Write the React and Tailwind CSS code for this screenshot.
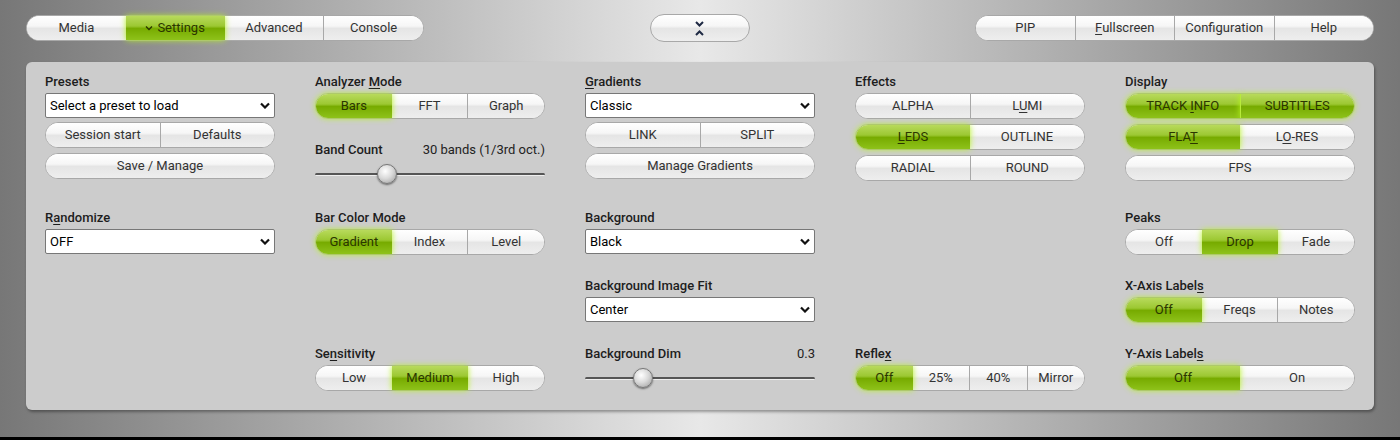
import React from "react";

const white =
  "bg-[linear-gradient(to_bottom,#ffffff_0%,#f6f6f6_42%,#e5e5e5_52%,#eeeeee_100%)] text-[#333]";
const green =
  "bg-[linear-gradient(to_bottom,#b8da5c_0%,#9cc832_42%,#77ab00_52%,#8ec21a_100%)] text-[#2b3600] shadow-[0_0_6px_#b6f41e] z-10";

function Seg({ items, active = [], h = "h-[26px]" }) {
  return (
    <div className={`flex ${h} rounded-full border border-[#a8a8a8] bg-white`}>
      {items.map((it, i) => {
        const on = active.includes(i);
        const prevOn = i > 0 && active.includes(i - 1);
        const first = i === 0;
        const last = i === items.length - 1;
        return (
          <div
            key={i}
            className={`relative flex-1 flex items-center justify-center text-[13px] ${on ? green : white} ${
              first ? "rounded-l-full" : on && prevOn ? "border-l border-[#b7ea3a]" : on || prevOn ? "" : "border-l border-[#a8a8a8]"
            } ${last ? "rounded-r-full" : ""}`}
          >
            {it}
          </div>
        );
      })}
    </div>
  );
}

function Label({ children, right }) {
  return (
    <div className="h-[23px] flex items-center justify-between text-[13px] text-[#1d1d1d] font-medium">
      <span>{children}</span>
      {right && <span className="font-normal text-[#222]">{right}</span>}
    </div>
  );
}

function Select({ value }) {
  return (
    <div className="relative h-[25px] bg-white border border-[#777] rounded-[2px] flex items-center pl-[4px] text-[13px] text-black">
      {value}
      <svg className="absolute right-[4px] top-[8px]" width="10" height="7" viewBox="0 0 10 7">
        <path d="M1 1.5 L5 5.5 L9 1.5" fill="none" stroke="#111" strokeWidth="2.2" />
      </svg>
    </div>
  );
}

function Slider({ pos }) {
  return (
    <div className="relative h-[26px] flex items-center">
      <div className="w-full h-[3px] rounded-full bg-[#555] border-b border-[#eee]" />
      <div
        className="absolute top-[3px] w-[20px] h-[20px] rounded-full border border-[#777] bg-[radial-gradient(circle_at_40%_35%,#ffffff_0%,#dadada_45%,#9a9a9a_100%)] shadow-[0_1px_2px_rgba(0,0,0,0.5)]"
        style={{ left: pos }}
      />
    </div>
  );
}

const u = (s) => <u className="underline-offset-2">{s}</u>;

export default function App() {
  return (
    <div className="w-[1400px] h-[440px] bg-black font-['Roboto',sans-serif]">
      <div className="h-[437px] bg-[linear-gradient(to_right,#777777_0%,#e8e8e8_50%,#777777_100%)] pt-[14px] px-[26px]">
        <div className="flex justify-between items-center">
          <div className="w-[398px]">
            <Seg
              items={[
                "Media",
                <span className="flex items-center gap-[4px]">
                  <svg width="8" height="6" viewBox="0 0 8 6">
                    <path d="M1 1.5 L4 4.5 L7 1.5" fill="none" stroke="#2b3600" strokeWidth="1.4" />
                  </svg>
                  Settings
                </span>,
                "Advanced",
                "Console",
              ]}
              active={[1]}
            />
          </div>
          <div className={`w-[100px] h-[28px] rounded-full border border-[#a8a8a8] flex flex-col items-center justify-center gap-[3px] ${white}`}>
            <svg width="9" height="6" viewBox="0 0 9 6">
              <path d="M1 1 L4.5 4.5 L8 1" fill="none" stroke="#1f2a44" strokeWidth="2" />
            </svg>
            <svg width="9" height="6" viewBox="0 0 9 6">
              <path d="M1 5 L4.5 1.5 L8 5" fill="none" stroke="#1f2a44" strokeWidth="2" />
            </svg>
          </div>
          <div className="w-[399px]">
            <Seg items={["PIP", <span>{u("F")}ullscreen</span>, "Configuration", "Help"]} />
          </div>
        </div>

        <div className="mt-[20px] h-[348px] bg-[#cccccc] rounded-[6px] shadow-[1px_2px_3px_rgba(0,0,0,0.35)] px-[19px] pt-[8px]">
          <div className="grid grid-cols-5 gap-x-[40px] grid-rows-[repeat(5,68px)]">
            {/* column 1 */}
            <div className="col-start-1 row-start-1 row-span-2">
              <Label>Presets</Label>
              <Select value="Select a preset to load" />
              <div className="mt-[4px]">
                <Seg items={["Session start", "Defaults"]} />
              </div>
              <div className="mt-[5px]">
                <Seg items={["Save / Manage"]} />
              </div>
            </div>
            <div className="col-start-1 row-start-3">
              <Label>R{u("a")}ndomize</Label>
              <Select value="OFF" />
            </div>

            {/* column 2 */}
            <div className="col-start-2 row-start-1">
              <Label>Analyzer {u("M")}ode</Label>
              <Seg items={["Bars", "FFT", "Graph"]} active={[0]} />
            </div>
            <div className="col-start-2 row-start-2">
              <Label right="30 bands (1/3rd oct.)">Band Count</Label>
              <Slider pos="62px" />
            </div>
            <div className="col-start-2 row-start-3">
              <Label>Bar Color Mode</Label>
              <Seg items={["Gradient", "Index", "Level"]} active={[0]} />
            </div>
            <div className="col-start-2 row-start-5">
              <Label>Se{u("n")}sitivity</Label>
              <Seg items={["Low", "Medium", "High"]} active={[1]} />
            </div>

            {/* column 3 */}
            <div className="col-start-3 row-start-1 row-span-2">
              <Label>{u("G")}radients</Label>
              <Select value="Classic" />
              <div className="mt-[4px]">
                <Seg items={["LINK", "SPLIT"]} />
              </div>
              <div className="mt-[5px]">
                <Seg items={["Manage Gradients"]} />
              </div>
            </div>
            <div className="col-start-3 row-start-3">
              <Label>Background</Label>
              <Select value="Black" />
            </div>
            <div className="col-start-3 row-start-4">
              <Label>Background Image Fit</Label>
              <Select value="Center" />
            </div>
            <div className="col-start-3 row-start-5">
              <Label right="0.3">Background Dim</Label>
              <Slider pos="48px" />
            </div>

            {/* column 4 */}
            <div className="col-start-4 row-start-1 row-span-2 flex flex-col gap-[5px]">
              <div className="-mb-[5px]">
                <Label>Effects</Label>
              </div>
              <Seg items={["ALPHA", <span>L{u("U")}MI</span>]} />
              <Seg items={[<span>{u("L")}EDS</span>, "OUTLINE"]} active={[0]} />
              <Seg items={["RADIAL", "ROUND"]} />
            </div>
            <div className="col-start-4 row-start-5">
              <Label>Refle{u("x")}</Label>
              <Seg items={["Off", "25%", "40%", "Mirror"]} active={[0]} />
            </div>

            {/* column 5 */}
            <div className="col-start-5 row-start-1 row-span-2 flex flex-col gap-[5px]">
              <div className="-mb-[5px]">
                <Label>Display</Label>
              </div>
              <Seg items={[<span>TRACK {u("I")}NFO</span>, "SUBTITLES"]} active={[0, 1]} />
              <Seg items={[<span>FLA{u("T")}</span>, <span>L{u("O")}-RES</span>]} active={[0]} />
              <Seg items={["FPS"]} />
            </div>
            <div className="col-start-5 row-start-3">
              <Label>Peaks</Label>
              <Seg items={["Off", "Drop", "Fade"]} active={[1]} />
            </div>
            <div className="col-start-5 row-start-4">
              <Label>X-Axis Label{u("s")}</Label>
              <Seg items={["Off", "Freqs", "Notes"]} active={[0]} />
            </div>
            <div className="col-start-5 row-start-5">
              <Label>Y-Axis Label{u("s")}</Label>
              <Seg items={["Off", "On"]} active={[0]} />
            </div>
          </div>
        </div>
      </div>
    </div>
  );
}
